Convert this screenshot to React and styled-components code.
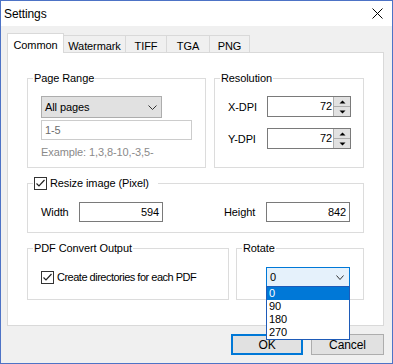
import React from 'react'
import styled, { createGlobalStyle } from 'styled-components'

const GlobalStyle = createGlobalStyle`
  html, body { margin: 0; padding: 0; background: #fff; }
  body {
    font-family: "Liberation Sans", Arial, sans-serif;
    font-size: 11px;
    letter-spacing: -0.1px;
    color: #000;
  }
  * { box-sizing: border-box; }
`

const Window = styled.div`
  width: 393px;
  height: 364px;
  border: 1px solid #4d73c6;
  background: #f0f0f0;
  display: flex;
  flex-direction: column;
`

const TitleBar = styled.div`
  height: 25px;
  background: #fff;
  display: flex;
  align-items: center;
  justify-content: space-between;
  padding: 0 9px 0 3px;
  .title {
    font-size: 12px;
  }
`

const Body = styled.div`
  flex: 1;
  display: flex;
  flex-direction: column;
  padding: 7px 8px 0 6px;
`

const TabRow = styled.div`
  display: flex;
  align-items: flex-end;
  height: 19px;
`

const Tab = styled.div`
  width: ${p => p.$w}px;
  height: ${p => (p.$active ? 20 : 17)}px;
  margin-bottom: ${p => (p.$active ? -1 : 0)}px;
  margin-left: ${p => (p.$first ? 0 : -1)}px;
  background: ${p => (p.$active ? '#fff' : '#f0f0f0')};
  border: 1px solid #d9d9d9;
  border-bottom: none;
  text-align: center;
  line-height: ${p => (p.$active ? 19 : 16)}px;
  padding-top: 2px;
  position: relative;
  z-index: ${p => (p.$active ? 2 : 1)};
`

const Panel = styled.div`
  height: 274px;
  background: #fff;
  border: 1px solid #d9d9d9;
  padding: 19px;
  display: flex;
  flex-direction: column;
  gap: 9px;
`

const Row = styled.div`
  display: flex;
  gap: ${p => p.$gap || 0}px;
`

const Group = styled.fieldset`
  width: ${p => p.$w}px;
  height: ${p => p.$h}px;
  margin: 0;
  padding: 0;
  min-width: 0;
  border: 1px solid #dcdcdc;
  legend {
    margin-left: 5px;
    padding: 0 ${p => p.$lpr || 1}px 0 1px;
    line-height: 13px;
    display: flex;
    align-items: center;
    gap: 3px;
  }
`

const GroupBody = styled.div`
  padding: ${p => p.$pad};
`

const Combo = styled.div`
  position: relative;
  width: ${p => p.$w}px;
  height: ${p => p.$h}px;
  display: flex;
  align-items: center;
  justify-content: space-between;
  padding: 0 ${p => p.$pr}px 0 3px;
  background: ${p => (p.$open ? '#e5f1fb' : '#e1e1e1')};
  border: 1px solid ${p => (p.$open ? '#0078d7' : '#adadad')};
`

const DropList = styled.div`
  position: absolute;
  left: -1px;
  top: 100%;
  width: 84px;
  border: 1px solid #1e5bb8;
  background: #fff;
  z-index: 10;
`

const DropItem = styled.div`
  height: 13px;
  line-height: 13px;
  padding-left: 2px;
  background: ${p => (p.$sel ? '#0078d7' : '#fff')};
  color: ${p => (p.$sel ? '#fff' : '#000')};
`

const PlainInput = styled.div`
  width: 151px;
  height: 20px;
  margin-top: 2px;
  border: 1px solid #cccccc;
  color: #6d6d6d;
  padding-left: 3px;
  line-height: 18px;
`

const Hint = styled.div`
  margin-top: 6px;
  color: #8a8a8a;
  line-height: 13px;
`

const FormGrid = styled.div`
  display: grid;
  grid-template-columns: ${p => p.$cols};
  align-items: center;
  row-gap: ${p => p.$rowGap || 0}px;
`

const NumBox = styled.div`
  width: 84px;
  height: ${p => p.$h || 20}px;
  border: 1px solid #7a7a7a;
  background: #fff;
  display: flex;
`

const NumValue = styled.div`
  flex: 1;
  text-align: right;
  padding-right: ${p => p.$pr || 3}px;
  line-height: ${p => (p.$h || 20) - 2}px;
`

const Spin = styled.div`
  width: 17px;
  display: flex;
  flex-direction: column;
  border-left: 1px solid #adadad;
`

const SpinBtn = styled.div`
  flex: 1;
  background: #e1e1e1;
  display: flex;
  align-items: center;
  justify-content: center;
  & + & {
    border-top: 1px solid #adadad;
  }
`

const Box = styled.span`
  width: 13px;
  height: 13px;
  border: 1px solid #333;
  background: #fff;
  display: inline-flex;
  align-items: center;
  justify-content: center;
`

const CheckLine = styled.div`
  display: flex;
  align-items: center;
  gap: 3px;
  line-height: 13px;
  letter-spacing: ${p => p.$ls || 0}px;
`

const ButtonRow = styled.div`
  display: flex;
  justify-content: flex-end;
  gap: 8px;
  margin-top: 8px;
`

const Button = styled.div`
  width: ${p => p.$w}px;
  height: 21px;
  background: #e1e1e1;
  border: ${p => (p.$default ? '2px solid #0078d7' : '1px solid #adadad')};
  display: flex;
  align-items: center;
  justify-content: center;
  font-size: 12px;
`

const Chevron = ({ w = 9 }) => (
  <svg width={w} height="5" viewBox={`0 0 ${w} 5`}>
    <polyline points={`0.5,0.5 ${w / 2},4.5 ${w - 0.5},0.5`} fill="none" stroke="#333" strokeWidth="1" />
  </svg>
)

const Arrow = ({ up }) => (
  <svg width="7" height="4" viewBox="0 0 7 4">
    <polygon points={up ? '0.5,3.5 3.5,0.5 6.5,3.5' : '0.5,0.5 3.5,3.5 6.5,0.5'} fill="#000" />
  </svg>
)

const Check = () => (
  <Box>
    <svg width="11" height="11" viewBox="0 0 11 11">
      <polyline points="1.5,5.5 4,8 9.5,2" fill="none" stroke="#222" strokeWidth="1.2" />
    </svg>
  </Box>
)

const Spinner = ({ value }) => (
  <NumBox $h={21}>
    <NumValue $h={21} $pr={1}>{value}</NumValue>
    <Spin>
      <SpinBtn><Arrow up /></SpinBtn>
      <SpinBtn><Arrow /></SpinBtn>
    </Spin>
  </NumBox>
)

const tabs = [
  { name: 'Common', w: 57 },
  { name: 'Watermark', w: 63 },
  { name: 'TIFF', w: 42 },
  { name: 'TGA', w: 44 },
  { name: 'PNG', w: 41 },
]

export default function App() {
  return (
    <>
      <GlobalStyle />
      <Window>
        <TitleBar>
          <span className="title">Settings</span>
          <svg width="11" height="11" viewBox="0 0 11 11">
            <path d="M0.5 0.5 L10.5 10.5 M10.5 0.5 L0.5 10.5" stroke="#000" strokeWidth="1" />
          </svg>
        </TitleBar>
        <Body>
          <TabRow>
            {tabs.map((t, i) => (
              <Tab key={t.name} $w={t.w} $active={i === 0} $first={i === 0}>{t.name}</Tab>
            ))}
          </TabRow>
          <Panel>
            <Row $gap={8}>
              <Group $w={179} $h={96}>
                <legend>Page Range</legend>
                <GroupBody $pad="11px 13px 0">
                  <Combo $w={121} $h={22} $pr={4}>
                    <span>All pages</span>
                    <Chevron />
                  </Combo>
                  <PlainInput>1-5</PlainInput>
                  <Hint>Example: 1,3,8-10,-3,5-</Hint>
                </GroupBody>
              </Group>
              <Group $w={150} $h={96}>
                <legend>Resolution</legend>
                <GroupBody $pad="11px 12px 0 13px">
                  <FormGrid $cols="39px 84px" $rowGap={11}>
                    <span>X-DPI</span>
                    <Spinner value="72" />
                    <span>Y-DPI</span>
                    <Spinner value="72" />
                  </FormGrid>
                </GroupBody>
              </Group>
            </Row>
            <Row>
              <Group $w={337} $h={56} $lpr={9}>
                <legend><Check />Resize image (Pixel)</legend>
                <GroupBody $pad="12px 13px 0">
                  <FormGrid $cols="38px 84px 1fr 42px 84px">
                    <span>Width</span>
                    <NumBox><NumValue>594</NumValue></NumBox>
                    <span />
                    <span>Height</span>
                    <NumBox><NumValue>842</NumValue></NumBox>
                  </FormGrid>
                </GroupBody>
              </Group>
            </Row>
            <Row $gap={7}>
              <Group $w={202} $h={58}>
                <legend>PDF Convert Output</legend>
                <GroupBody $pad="16px 13px 0 13px">
                  <CheckLine $ls={-0.5}>
                    <Check />
                    <span>Create directories for each PDF</span>
                  </CheckLine>
                </GroupBody>
              </Group>
              <Group $w={128} $h={58}>
                <legend>Rotate</legend>
                <GroupBody $pad="12px 0 0 29px">
                  <Combo $w={84} $h={20} $pr={5} $open>
                    <span>0</span>
                    <Chevron w={8} />
                    <DropList>
                      {['0', '90', '180', '270'].map((v, i) => (
                        <DropItem key={v} $sel={i === 0}>{v}</DropItem>
                      ))}
                    </DropList>
                  </Combo>
                </GroupBody>
              </Group>
            </Row>
          </Panel>
          <ButtonRow>
            <Button $w={72} $default>OK</Button>
            <Button $w={73}>Cancel</Button>
          </ButtonRow>
        </Body>
      </Window>
    </>
  )
}
